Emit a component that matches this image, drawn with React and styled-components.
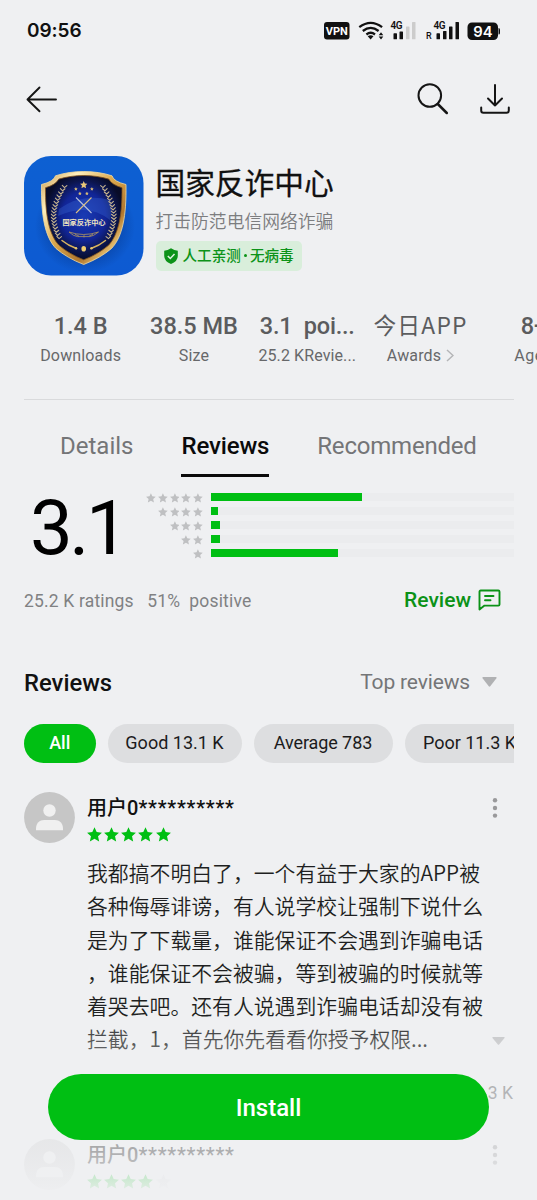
import React from 'react';
import styled, { createGlobalStyle } from 'styled-components';

const BG = '#eff0f2';
const GREEN = '#00bf13';

const GlobalStyle = createGlobalStyle`
  * { box-sizing: border-box; }
  html, body { margin: 0; background: ${BG}; }
  body { font-family: Roboto, "Noto Sans CJK SC", sans-serif; color: #111; overflow: hidden; }
`;

const Screen = styled.main`
  position: relative;
  width: 537px;
  height: 1200px;
  overflow: hidden;
  display: flex;
  flex-direction: column;
  background: ${BG};
  white-space: nowrap;
`;

const StatusBar = styled.header`
  height: 62px;
  flex: none;
  padding: 0 37px 0 27px;
  display: flex;
  align-items: center;
  justify-content: space-between;
`;
const Clock = styled.span`
  font: 600 19px/24px Inter, sans-serif;
  letter-spacing: -0.05px;
`;

const Toolbar = styled.nav`
  height: 74px;
  flex: none;
  padding: 0 27px 0 25px;
  display: flex;
  align-items: center;
  gap: 31px;
`;
const Spacer = styled.div`
  flex: ${(p) => (p.$h ? `0 0 ${p.$h}px` : 1)};
`;

const AppHeader = styled.section`
  height: 159px;
  flex: none;
  padding: 20px 24px 0;
  display: flex;
  gap: 12px;
`;
const AppInfo = styled.div`
  display: flex;
  flex-direction: column;
  align-items: flex-start;
`;
const AppName = styled.h1`
  margin: 4px 0 0;
  font: 400 29.7px/44px "Noto Sans CJK SC", sans-serif;
  -webkit-text-stroke: 0.3px #111;
`;
const Tagline = styled.p`
  margin: 3px 0 0;
  font: 350 17.8px/26px "Noto Sans CJK SC", sans-serif;
  color: #7c7d7f;
`;
const SafeBadge = styled.div`
  margin-top: 8px;
  width: 146px;
  height: 30px;
  padding-left: 7px;
  display: flex;
  align-items: center;
  gap: 4px;
  border-radius: 5px;
  background: #d9eedb;
  color: #0c9318;
  font: 500 14.6px/28px "Noto Sans CJK SC", sans-serif;
`;
const BadgeText = styled.span`
  height: 30px;
`;
const Dot = styled.i`
  display: inline-block;
  width: 3px;
  height: 3px;
  margin: 0 3px 4px;
  border-radius: 50%;
  background: currentColor;
`;

const Stats = styled.section`
  margin-left: 24px;
  height: 104px;
  flex: none;
  padding-top: 15px;
  display: grid;
  grid-template-columns: repeat(5, 113.3px);
  overflow: hidden;
`;
const Stat = styled.div`
  display: flex;
  flex-direction: column;
  align-items: center;
`;
const StatValue = styled.div`
  height: ${(p) => (p.$cjk ? 29 : 31)}px;
  margin-bottom: ${(p) => (p.$cjk ? 2 : 0)}px;
  font: ${(p) => (p.$cjk ? '400 22.8px/29px "Noto Sans CJK SC", sans-serif' : '500 23.5px/32px Roboto, sans-serif')};
  letter-spacing: ${(p) => p.$track || 0}px;
  white-space: pre;
  color: #5b5c5e;
`;
const StatLabel = styled.div`
  height: 28px;
  display: flex;
  align-items: center;
  gap: 5px;
  font-size: 16px;
  letter-spacing: ${(p) => p.$track || 0}px;
  color: #67686a;
`;
const Divider = styled.hr`
  width: 490px;
  height: 1px;
  flex: none;
  margin: 0 24px;
  border: 0;
  background: #d9dadc;
`;

const Tabs = styled.nav`
  height: 77px;
  flex: none;
  padding: 0 60px;
  display: flex;
  gap: 48px;
`;
const Tab = styled.div`
  height: 77px;
  padding-top: 30px;
  font-size: 24px;
  line-height: 32px;
  letter-spacing: ${(p) => p.$track || 0}px;
  color: ${(p) => (p.$active ? '#0a0a0a' : '#747577')};
  font-weight: ${(p) => (p.$active ? 500 : 400)};
  border-bottom: 3px solid ${(p) => (p.$active ? '#0a0a0a' : 'transparent')};
`;

const Rating = styled.section`
  height: 100px;
  flex: none;
  padding: 16px 23px 0 30px;
  display: flex;
`;
const Score = styled.div`
  width: 113px;
  font-size: 76px;
  line-height: 70px;
  letter-spacing: -3.4px;
  color: #000;
`;
const Histogram = styled.div`
  flex: 1;
  display: flex;
  flex-direction: column;
`;
const HistRow = styled.div`
  height: 14.1px;
  display: flex;
  align-items: flex-start;
  justify-content: flex-end;
  gap: 8px;
`;
const MiniStars = styled.div`
  display: flex;
  gap: 2px;
`;
const Track = styled.div`
  width: 303px;
  height: 8px;
  background: #ebecee;
`;
const Fill = styled.div`
  height: 8px;
  background: ${GREEN};
`;

const SpreadRow = styled.div`
  height: ${(p) => p.$h}px;
  flex: none;
  padding: ${(p) => p.$top || 0}px ${(p) => p.$right}px 0 24px;
  display: flex;
  align-items: center;
  justify-content: space-between;
`;
const RatingNote = styled.span`
  font-size: 17.5px;
  letter-spacing: 0.17px;
  color: #808183;
  white-space: pre;
`;
const ReviewLink = styled.span`
  display: flex;
  align-items: center;
  gap: 7px;
  font-size: 21px;
  line-height: 24px;
  padding-bottom: 2px;
  font-weight: 500;
  color: #0b9217;
`;
const Heading = styled.h2`
  margin: 0;
  padding-top: 2px;
  font-size: 23.8px;
  font-weight: 500;
`;
const SortMenu = styled.span`
  display: flex;
  align-items: center;
  gap: 12px;
  font-size: 21px;
  letter-spacing: -0.15px;
  color: #747577;
`;

const Chips = styled.div`
  width: 490px;
  height: 39px;
  flex: none;
  margin-left: 24px;
  display: flex;
  gap: 12px;
  overflow: hidden;
`;
const Chip = styled.span`
  width: ${(p) => p.$w}px;
  height: 39px;
  flex: none;
  border-radius: 20px;
  text-align: center;
  font-size: 18px;
  line-height: 38px;
  letter-spacing: ${(p) => p.$track || 0}px;
  font-weight: ${(p) => (p.$active ? 500 : 400)};
  background: ${(p) => (p.$active ? GREEN : '#dddee0')};
  color: ${(p) => (p.$active ? '#fff' : '#1b1b1c')};
`;

const Review = styled.article`
  height: ${(p) => p.$h}px;
  flex: none;
  padding: 0 24px;
  display: flex;
  gap: 12px;
`;
const Dimmed = styled.div`
  display: flex;
  flex: none;
  opacity: ${(p) => p.$opacity};
`;
const ReviewMain = styled.div`
  flex: 1;
  display: flex;
  flex-direction: column;
`;
const ReviewTop = styled.div`
  height: 31px;
  padding-right: 15px;
  display: flex;
  align-items: center;
  justify-content: space-between;
`;
const UserName = styled.span`
  font-size: 20px;
  line-height: 30px;
  font-weight: 500;
`;
const Mask = styled.span`
  letter-spacing: 0.76px;
`;
const Stars = styled.div`
  height: 22px;
  padding-top: 4px;
  display: flex;
  gap: 2.3px;
  margin-left: -0.5px;
`;
const ReviewBody = styled.div`
  margin-top: 11px;
  display: flex;
  align-items: flex-end;
  justify-content: space-between;
`;
const ReviewText = styled.p`
  margin: 0;
  font: 350 20.85px/33.3px "Noto Sans CJK SC", sans-serif;
  color: #1e1f21;
`;
const Expand = styled.div`
  padding: 0 8px 11px 0;
  display: flex;
`;
const LikeCount = styled.div`
  height: 26px;
  text-align: right;
  font-size: 17.5px;
  line-height: 26px;
  color: #77787a;
`;

const BottomFade = styled.div`
  position: absolute;
  left: 0;
  right: 0;
  bottom: 0;
  height: 185px;
  background: linear-gradient(
    to bottom,
    rgba(239, 240, 242, 0) 0%,
    rgba(239, 240, 242, 0.28) 14%,
    rgba(239, 240, 242, 0.5) 42%,
    rgba(239, 240, 242, 0.7) 74%,
    rgba(239, 240, 242, 0.85) 88%,
    rgba(239, 240, 242, 1) 100%
  );
`;
const InstallButton = styled.button`
  position: absolute;
  left: 48px;
  bottom: 60px;
  width: 441px;
  height: 66px;
  padding: 2px 0 0;
  border: 0;
  border-radius: 33px;
  background: ${GREEN};
  color: #fff;
  font: 500 24px/64px Roboto, sans-serif;
`;

const Star = ({ size, color }) => (
  <svg width={size} height={size} viewBox="0 0 20 20" fill={color}>
    <path d="M10 .3l2.9 6.5 7 .8-5.2 4.7 1.5 7L10 15.8l-6.2 3.5 1.5-7L.1 7.6l7-.8z" />
  </svg>
);

const Triangle = ({ w, h, color }) => (
  <svg width={w} height={h} viewBox="0 0 16 10" preserveAspectRatio="none" fill={color}>
    <path d="M1.2 0h13.6q1.2.3.6 1.3L8.8 9.3q-.8.9-1.6 0L.6 1.3Q0 .3 1.2 0z" />
  </svg>
);

const Avatar = () => (
  <svg width="51" height="51" viewBox="0 0 51 51">
    <circle cx="25.5" cy="25.5" r="25.4" fill="#c6c6c6" />
    <circle cx="25.5" cy="18.5" r="6.2" fill="#f0f0f0" />
    <path d="M12 38.2v-1.6c0-5.4 3.6-8.7 8.2-8.7h10.6c4.6 0 8.2 3.3 8.2 8.7v1.6z" fill="#f0f0f0" />
  </svg>
);

const Kebab = () => (
  <svg width="6" height="22" viewBox="0 0 6 22" fill="#99999b">
    <circle cx="3" cy="3.2" r="2.2" />
    <circle cx="3" cy="11" r="2.2" />
    <circle cx="3" cy="18.6" r="2.2" />
  </svg>
);

const StatusIcons = () => (
  <svg width="178" height="24" viewBox="322 19 178 24" fontFamily="Roboto, sans-serif" fill="#111">
    <rect x="324" y="22" width="25.5" height="17.5" rx="3" />
    <text x="336.8" y="34.6" fontSize="11" fontWeight="700" fill="#fff" textAnchor="middle">VPN</text>
    <g fill="none" stroke="#111" strokeWidth="2.3">
      <path d="M359.3 27.2q11.4-8.6 22.8 0" />
      <path d="M362.8 31q7.9-6.2 15.8 0" />
      <path d="M366.4 34.5q4.3-3.4 8.6 0" />
    </g>
    <path d="M367.7 36.2q2.9-1.8 5.8 0l-2.9 3.2z" />
    <path d="M381 32.3l2.3 2.9h-4.6zM381 39.5l-2.3-2.9h4.6z" />
    <text x="390.5" y="29.3" fontSize="10" fontWeight="600" letterSpacing="-.5">4G</text>
    <rect x="393.5" y="33.3" width="3.5" height="6" rx=".6" />
    <rect x="399.5" y="31.5" width="3.5" height="7.8" rx=".6" />
    <rect x="406" y="26.5" width="3.5" height="12.8" rx=".6" fill="#ccc" />
    <rect x="412" y="22" width="3.5" height="17.3" rx=".6" fill="#ccc" />
    <text x="426" y="39.3" fontSize="9" fontWeight="500">R</text>
    <text x="433.5" y="29.3" fontSize="10" fontWeight="600" letterSpacing="-.5">4G</text>
    <rect x="436.5" y="33.3" width="3.5" height="6" rx=".6" />
    <rect x="443" y="31" width="3.5" height="8.3" rx=".6" />
    <rect x="449" y="26.5" width="3.5" height="12.8" rx=".6" />
    <rect x="455.5" y="22" width="3.5" height="17.3" rx=".6" />
    <rect x="467.5" y="22.5" width="30.5" height="17.5" rx="4.5" />
    <path d="M498.5 28q1.5 0 1.5 1.5v3.5q0 1.5-1.5 1.5z" />
    <text x="483" y="36.6" fontSize="14.8" fontWeight="600" fontFamily="Inter, sans-serif" fill="#fff" textAnchor="middle">94</text>
  </svg>
);

const laurelLeaves = Array.from({ length: 17 }, (_, i) => {
  const t = i / 16;
  return { x: 43 - 13.5 * Math.sin(Math.PI * (0.06 + t * 0.74)), y: 31 + t * 51 };
});

const Laurel = ({ flip }) => (
  <g
    transform={flip ? 'translate(119.5 0) scale(-1 1)' : undefined}
    stroke="#c9b68f"
    strokeWidth="1.1"
    fill="none"
    strokeLinecap="round"
  >
    {laurelLeaves.map((l, i) => (
      <path key={i} d={`M${l.x - 2.2} ${l.y - 1.6}l2.2 2.2 2.4-2`} />
    ))}
    <path d="M38 84.5q6 5 14.500 8" strokeWidth="1.5" stroke="#d9b45e" />
    <circle cx="52" cy="92.3" r="1.2" fill="#e5c26c" stroke="none" />
  </g>
);

const AppIcon = () => (
  <svg width="119.5" height="120" viewBox="0 0 119.5 120">
    <defs>
      <linearGradient id="blue" x1="0" y1="0" x2="0" y2="1">
        <stop offset="0" stopColor="#0d60d2" />
        <stop offset="1" stopColor="#0d5ad2" />
      </linearGradient>
      <linearGradient id="gold" x1="0" y1="0" x2="1" y2="1">
        <stop offset="0" stopColor="#c9984a" />
        <stop offset=".22" stopColor="#fff0be" />
        <stop offset=".45" stopColor="#dcaa50" />
        <stop offset=".7" stopColor="#b0772e" />
        <stop offset=".86" stopColor="#f2ce7c" />
        <stop offset="1" stopColor="#a56c25" />
      </linearGradient>
      <radialGradient id="navy" cx=".5" cy=".48" r=".52">
        <stop offset="0" stopColor="#1a3bb4" />
        <stop offset=".55" stopColor="#112596" />
        <stop offset=".8" stopColor="#0c1650" />
        <stop offset="1" stopColor="#080c28" />
      </radialGradient>
      <radialGradient id="shade">
        <stop offset=".5" stopColor="#04286f" stopOpacity=".5" />
        <stop offset="1" stopColor="#04286f" stopOpacity="0" />
      </radialGradient>
    </defs>
    <rect width="119.5" height="119.5" rx="27" fill="url(#blue)" />
    <ellipse cx="61" cy="70" rx="50" ry="47" fill="url(#shade)" />
    <path
      d="M59.7 15.5C50 15.5 40 17 31.5 19.8Q30 25.5 17.5 28.5C17 60 21 81 32 92.5Q43 102 59.7 108.5Q76.5 102 87.5 92.5C98.5 81 102.5 60 102 28.5Q89.5 25.5 88 19.8C79.5 17 69.5 15.5 59.7 15.5z"
      fill="url(#gold)" stroke="#f4dca0" strokeWidth=".8"
    />
    <path
      d="M59.7 19.5C51 19.5 42.5 20.8 34.8 23.1Q31.5 29 21.5 31.7C21.2 59 25 78.5 35 89.3Q45 98 59.7 103.8Q74.5 98 84.5 89.3C94.5 78.5 98.3 59 98 31.7Q88 29 84.7 23.1C77 20.8 68.5 19.5 59.7 19.5z"
      fill="url(#navy)" stroke="#7e5220" strokeWidth=".8"
    />
    <path d="M35 53Q58 37 86 44Q89 54 86 64Q64 46 34 60z" fill="#3a68d4" opacity=".35" />
    <Laurel />
    <Laurel flip />
    <g transform="translate(56 25)"><Star size={7.5} color="#e9c778" /></g>
    <g transform="translate(50 31)"><Star size={3.8} color="#d9bb77" /></g>
    <g transform="translate(54 35.5)"><Star size={3.8} color="#d9bb77" /></g>
    <g transform="translate(61 35.5)"><Star size={3.8} color="#d9bb77" /></g>
    <g transform="translate(66 31)"><Star size={3.8} color="#d9bb77" /></g>
    <path d="M52 41.5l15.5 15.5" stroke="#b9c2dc" strokeWidth="1.1" />
    <path d="M67.5 41.5L52 57" stroke="#dcc082" strokeWidth="1.1" />
    <text x="60" y="69" textAnchor="middle" fontFamily="Noto Sans CJK SC, sans-serif" fontSize="7.2" fontWeight="700" fill="#f0e4c0">国家反诈中心</text>
    <path d="M45 76q14.500 5 29.500 0q-5 4.200-9 4.600h-12q-4-.4-8.500-4.600z" fill="none" stroke="#b3985f" strokeWidth=".8" />
    <path d="M51 78.200l4 2M60 79v2.500M69 78.200l-4 2" fill="none" stroke="#b3985f" strokeWidth=".7" />
    <ellipse cx="59.7" cy="92.8" rx="2.3" ry="2.8" fill="#f0cc71" />
  </svg>
);

const BackIcon = () => (
  <svg width="32" height="28" viewBox="0 0 32 28" fill="none" stroke="#151515" strokeWidth="1.9" strokeLinecap="round" strokeLinejoin="round">
    <path d="M14.5 2.5L2.5 14.5l12 11.8M2.5 14.5h28.5" />
  </svg>
);
const SearchIcon = () => (
  <svg width="32" height="32" viewBox="0 0 32 32" fill="none" stroke="#151515" strokeLinecap="round">
    <circle cx="12.8" cy="12.5" r="11.3" strokeWidth="2" />
    <path d="M20.8 21l9 9" strokeWidth="2.5" />
  </svg>
);
const DownloadIcon = () => (
  <svg width="30" height="32" viewBox="0 0 30 32" fill="none" stroke="#151515" strokeWidth="2" strokeLinecap="round" strokeLinejoin="round">
    <path d="M15 2v20.5M8 15.5l7 7 7-7M1.2 24.5v3q0 2.2 2.2 2.2h23.200q2.200 0 2.200-2.200V24.500" />
  </svg>
);
const ShieldIcon = () => (
  <svg width="16" height="17" viewBox="0 0 16 17">
    <path d="M8 .3q3.3 2.2 6.8 2.4v5.3q0 5.3-6.8 8Q1.2 13.3 1.2 8V2.7Q4.7 2.5 8 .3z" fill="#0c9318" />
    <path d="M4.8 8l2.5 2.5 4.2-4.4" fill="none" stroke="#e0f3e2" strokeWidth="1.5" />
  </svg>
);
const CommentIcon = () => (
  <svg width="23" height="22" viewBox="0 0 23 22" fill="none" stroke="#0b9217" strokeWidth="1.9" strokeLinejoin="round" strokeLinecap="round">
    <path d="M2.7 1.5h17.6q1.2 0 1.2 1.2v12.7q0 1.2-1.2 1.2H6.5L1.5 20.5V2.7q0-1.2 1.2-1.2zM7 7h8.5M7 11.3h5.5" />
  </svg>
);
const ChevronIcon = () => (
  <svg width="8" height="13" viewBox="0 0 8 13" fill="none" stroke="#b4b5b7" strokeWidth="1.5">
    <path d="M1 1l6 5.5L1 12" />
  </svg>
);

const histogram = [
  { stars: 5, width: 151 },
  { stars: 4, width: 6.5 },
  { stars: 3, width: 9 },
  { stars: 2, width: 9 },
  { stars: 1, width: 127 },
];

const reviewLines = [
  '我都搞不明白了，一个有益于大家的APP被',
  '各种侮辱诽谤，有人说学校让强制下说什么',
  '是为了下载量，谁能保证不会遇到诈骗电话',
  '，谁能保证不会被骗，等到被骗的时候就等',
  '着哭去吧。还有人说遇到诈骗电话却没有被',
  '拦截，1，首先你先看看你授予权限...',
];

const ReviewHead = ({ stars }) => (
  <>
    <ReviewTop>
      <UserName>用户0<Mask>**********</Mask></UserName>
      <Kebab />
    </ReviewTop>
    <Stars>
      {[1, 2, 3, 4, 5].map((n) => (
        <Star key={n} size={15} color={n <= stars ? GREEN : '#d8d9db'} />
      ))}
    </Stars>
  </>
);

export default function App() {
  return (
    <Screen>
      <GlobalStyle />
      <StatusBar>
        <Clock>09:56</Clock>
        <StatusIcons />
      </StatusBar>
      <Toolbar>
        <BackIcon />
        <Spacer />
        <SearchIcon />
        <DownloadIcon />
      </Toolbar>
      <AppHeader>
        <AppIcon />
        <AppInfo>
          <AppName>国家反诈中心</AppName>
          <Tagline>打击防范电信网络诈骗</Tagline>
          <SafeBadge>
            <ShieldIcon />
            <BadgeText>人工亲测<Dot />无病毒</BadgeText>
          </SafeBadge>
        </AppInfo>
      </AppHeader>
      <Stats>
        <Stat><StatValue>1.4 B</StatValue><StatLabel $track={0.15}>Downloads</StatLabel></Stat>
        <Stat><StatValue>38.5 MB</StatValue><StatLabel $track={0.15}>Size</StatLabel></Stat>
        <Stat><StatValue $track={-0.2}>3.1  poi...</StatValue><StatLabel $track={0.1}>25.2 KRevie...</StatLabel></Stat>
        <Stat><StatValue $cjk $track={1.2}>今日APP</StatValue><StatLabel $track={0.15}>Awards<ChevronIcon /></StatLabel></Stat>
        <Stat><StatValue>8+</StatValue><StatLabel $track={0.6}>Aged</StatLabel></Stat>
      </Stats>
      <Divider />
      <Tabs>
        <Tab>Details</Tab>
        <Tab $active $track={-0.15}>Reviews</Tab>
        <Tab $track={-0.2}>Recommended</Tab>
      </Tabs>
      <Rating>
        <Score>3.1</Score>
        <Histogram>
          {histogram.map((row) => (
            <HistRow key={row.stars}>
              <MiniStars>
                {Array.from({ length: row.stars }, (_, i) => <Star key={i} size={9.8} color="#bfc0c2" />)}
              </MiniStars>
              <Track><Fill style={{ width: row.width }} /></Track>
            </HistRow>
          ))}
        </Histogram>
      </Rating>
      <SpreadRow $h={48} $right={36}>
        <RatingNote>25.2 K ratings   51%  positive</RatingNote>
        <ReviewLink>Review<CommentIcon /></ReviewLink>
      </SpreadRow>
      <SpreadRow $h={99} $right={40} $top={15}>
        <Heading>Reviews</Heading>
        <SortMenu>Top reviews<Triangle w={15} h={10} color="#b0b1b3" /></SortMenu>
      </SpreadRow>
      <Chips>
        <Chip $active $w={71.5}>All</Chip>
        <Chip $w={134}>Good 13.1 K</Chip>
        <Chip $w={139} $track={-0.1}>Average 783</Chip>
        <Chip $w={130}>Poor 11.3 K</Chip>
      </Chips>
      <Spacer $h={29} />
      <Review $h={347}>
        <Avatar />
        <ReviewMain>
          <ReviewHead stars={5} />
          <ReviewBody>
            <ReviewText>
              {reviewLines.map((line) => <React.Fragment key={line}>{line}<br /></React.Fragment>)}
            </ReviewText>
            <Expand><Triangle w={13} h={8} color="#c0c1c3" /></Expand>
          </ReviewBody>
          <Spacer $h={24} />
          <LikeCount>3 K</LikeCount>
        </ReviewMain>
      </Review>
      <Review $h={60}>
        <Dimmed $opacity={0.6}><Avatar /></Dimmed>
        <ReviewMain>
          <ReviewHead stars={4} />
        </ReviewMain>
      </Review>
      <BottomFade />
      <InstallButton>Install</InstallButton>
    </Screen>
  );
}
